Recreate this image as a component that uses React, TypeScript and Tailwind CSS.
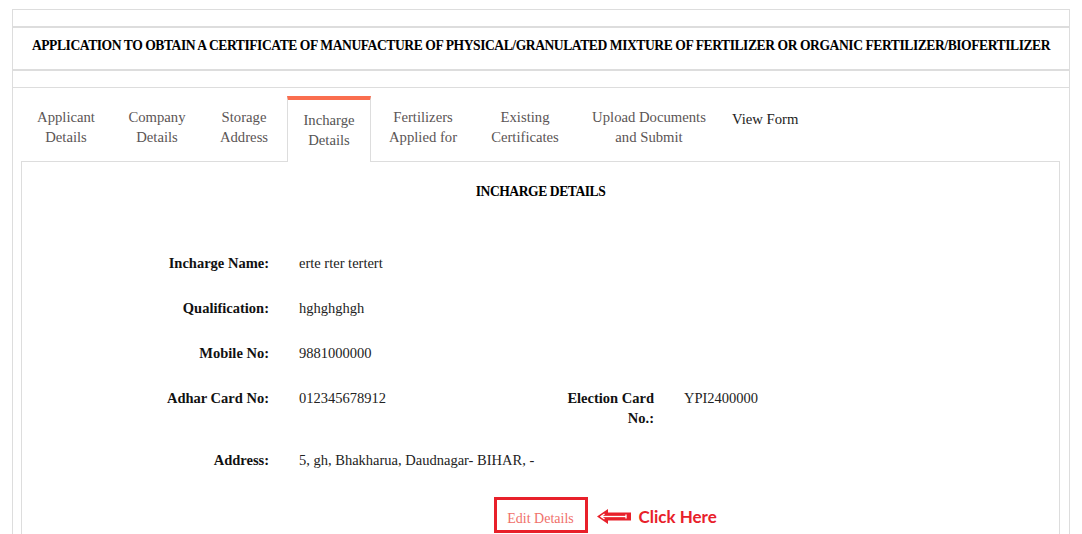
import React from "react";

const serif = "font-['Liberation_Serif',serif]";

const tabs: { lines: string[]; w: string; active?: boolean }[] = [
  { lines: ["Applicant", "Details"], w: "w-[90px]" },
  { lines: ["Company", "Details"], w: "w-[88px]" },
  { lines: ["Storage", "Address"], w: "w-[82px]" },
  { lines: ["Incharge", "Details"], w: "w-[84px]", active: true },
  { lines: ["Fertilizers", "Applied for"], w: "w-[100px]" },
  { lines: ["Existing", "Certificates"], w: "w-[100px]" },
  { lines: ["Upload Documents", "and Submit"], w: "w-[144px]" },
];

function Row({ label, value, className = "" }: { label: string; value: string; className?: string }) {
  return (
    <div className={`flex leading-[20px] ${className}`}>
      <div className="w-[247px] text-right font-bold text-[14.5px] text-[#111]">{label}</div>
      <div className="ml-[30px] text-[14.5px] text-[#222]">{value}</div>
    </div>
  );
}

export default function App() {
  return (
    <div className={`bg-white h-[534px] overflow-hidden pt-[9px] pl-[12px] text-[14px] ${serif}`}>
      <div className="w-[1058px] h-[600px] border border-[#ddd]">
        <div className="h-[18px] border-b-2 border-[#ddd]" />
        <div className="h-[43px] pb-[5px] border-b-2 border-[#ddd] flex items-center justify-center font-bold text-black text-[13.6px] tracking-[-0.45px] whitespace-nowrap">
          APPLICATION TO OBTAIN A CERTIFICATE OF MANUFACTURE OF PHYSICAL/GRANULATED MIXTURE OF FERTILIZER OR ORGANIC FERTILIZER/BIOFERTILIZER
        </div>
        <div className="h-[17px] border-b border-[#ddd]" />
        <div className="px-[8px] pt-[8px]">
          <div className="flex items-stretch h-[65px] text-[14.7px]">
            {tabs.map((t, i) =>
              t.active ? (
                <div
                  key={i}
                  className={`${t.w} mr-[2px] bg-white border-x border-[#ddd] border-t-4 border-t-[#fa6e4f] -mb-px relative z-10 flex flex-col items-center pt-[10px] leading-[20px] text-[#555]`}
                >
                  {t.lines.map((l) => (
                    <span key={l}>{l}</span>
                  ))}
                </div>
              ) : (
                <div
                  key={i}
                  className={`${t.w} mr-[2px] flex flex-col items-center pt-[11px] leading-[20px] text-[#5b5555]`}
                >
                  {t.lines.map((l) => (
                    <span key={l} className="whitespace-nowrap">{l}</span>
                  ))}
                </div>
              )
            )}
            <div className="pl-[9px] pt-[13px] leading-[20px] text-[#222] whitespace-nowrap">View Form</div>
          </div>
          <div className="w-[1039px] h-[400px] border border-[#ddd]">
            <div className="pt-[20px] text-center font-bold leading-[20px] text-black text-[13.6px] tracking-[-0.45px]">INCHARGE DETAILS</div>
            <Row label="Incharge Name:" value="erte rter tertert" className="mt-[51px]" />
            <Row label="Qualification:" value="hghghghgh" className="mt-[25px]" />
            <Row label="Mobile No:" value="9881000000" className="mt-[25px]" />
            <div className="flex leading-[20px] mt-[25px] text-[14.5px]">
              <div className="w-[247px] text-right font-bold text-[#111]">Adhar Card No:</div>
              <div className="ml-[30px] w-[225px] text-[#222]">012345678912</div>
              <div className="ml-[30px] w-[100px] text-right font-bold text-[#111]">
                Election Card
                <br />
                No.:
              </div>
              <div className="ml-[30px] text-[#222]">YPI2400000</div>
            </div>
            <Row label="Address:" value="5, gh, Bhakharua, Daudnagar- BIHAR, -" className="mt-[22px]" />
            <div className="mt-[27px] flex justify-center">
              <div className="relative">
                <div className="w-[94px] h-[36px] border-[3px] border-[#e8202a] flex items-center justify-center pt-[6px] text-[14px] text-[#f0706a] whitespace-nowrap">
                  Edit Details
                </div>
                <div className="absolute left-[103px] top-[11px] flex items-center gap-[8px] whitespace-nowrap">
                  <svg width="34" height="15" viewBox="0 0 34 15">
                    <path d="M0 7.5 L11 0 L11 3.5 L34 3.5 L34 11.5 L11 11.5 L11 15 Z" fill="#e8202a" />
                    <path d="M4 7.5 L29 7.5" stroke="#fff" strokeWidth="1.3" />
                    <path d="M7.5 5 L4 7.5 L7.5 10" stroke="#fff" strokeWidth="1.3" fill="none" />
                    <path d="M29 5.5 L29 9.5" stroke="#fff" strokeWidth="1.3" />
                  </svg>
                  <span className="font-['Lato',sans-serif] font-bold text-[17px] text-[#e8202a] leading-none">Click Here</span>
                </div>
              </div>
            </div>
          </div>
        </div>
      </div>
    </div>
  );
}
